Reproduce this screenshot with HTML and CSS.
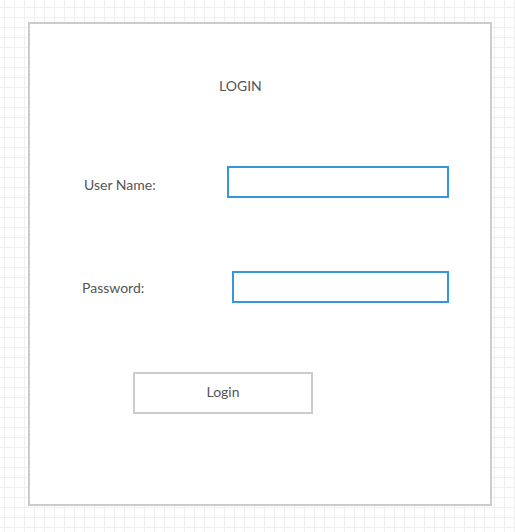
FILE: index.html
```html
<!DOCTYPE html>
<html>
<head>
<meta charset="utf-8">
<link rel="stylesheet" href="styles.css">
</head>
<body>
<div class="panel">
  <div class="title">LOGIN</div>
  <div class="row row-user">
    <label class="label">User Name:</label>
    <div class="input"></div>
  </div>
  <div class="row row-pass">
    <label class="label">Password:</label>
    <div class="input"></div>
  </div>
  <div class="btn">Login</div>
</div>
</body>
</html>
```
FILE: styles.css
```css
html, body {
  margin: 0;
  padding: 0;
}
body {
  width: 515px;
  height: 532px;
  overflow: hidden;
  background-color: #fff;
  background-image:
    linear-gradient(to right, #f0f0f0 1px, transparent 1px),
    linear-gradient(to bottom, #f0f0f0 1px, transparent 1px);
  background-size: 10px 10px;
  background-position: 4px 7px;
  font-family: Lato, "Liberation Sans", sans-serif;
  font-size: 14px;
  color: #555555;
  padding: 22px 0 0 28px;
  box-sizing: border-box;
}
.panel {
  width: 464px;
  height: 484px;
  box-sizing: border-box;
  border: 2px solid #cccccc;
  background: #fff;
  padding-top: 54px;
}
.title {
  line-height: 16px;
  padding-left: 189px;
}
.row {
  display: flex;
  align-items: center;
}
.row-user {
  margin-top: 72px;
  padding-left: 54px;
}
.row-pass {
  margin-top: 73px;
  padding-left: 52px;
}
.label {
  line-height: 16px;
}
.row-user .label {
  width: 143px;
  margin-top: 5px;
}
.row-pass .label {
  width: 150px;
  margin-top: 1px;
}
.input {
  box-sizing: border-box;
  height: 32px;
  border: 2px solid #3397db;
  background: #fff;
}
.row-user .input {
  width: 222px;
}
.row-pass .input {
  width: 217px;
}
.btn {
  box-sizing: border-box;
  width: 180px;
  height: 42px;
  margin: 69px 0 0 103px;
  border: 2px solid #cccccc;
  display: flex;
  align-items: center;
  justify-content: center;
  line-height: 16px;
  padding-bottom: 2px;
}
```
